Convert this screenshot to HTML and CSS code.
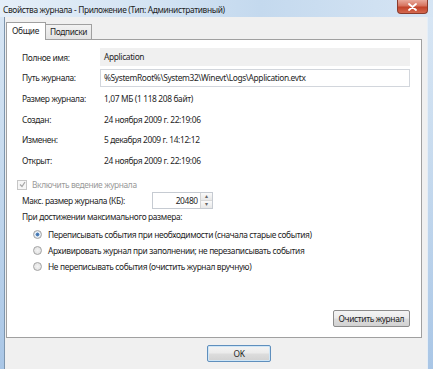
FILE: index.html
```html
<!DOCTYPE html>
<html lang="ru">
<head>
    <meta charset="UTF-8">
    <title>Свойства журнала</title>
    <link rel="stylesheet" href="styles.css">
</head>
<body>
    <div class="window">
        <div class="titlebar">
            <span class="title">Свойства журнала - Приложение (Тип: Административный)</span>
            <button class="close" title="Закрыть">
                <svg width="9" height="8" viewBox="0 0 9 8">
                    <path d="M1 1 L8 7 M8 1 L1 7" stroke="#fff" stroke-width="1.8" stroke-linecap="round"/>
                </svg>
            </button>
        </div>

        <div class="client">
            <div class="tabs">
                <div class="tab active">Общие</div>
                <div class="tab">Подписки</div>
            </div>

            <div class="panel">
                <div class="props">
                    <div class="label">Полное имя:</div>
                    <div class="value readonly">Application</div>

                    <div class="label">Путь журнала:</div>
                    <div class="value textbox">%SystemRoot%\System32\Winevt\Logs\Application.evtx</div>

                    <div class="label">Размер журнала:</div>
                    <div class="value">1,07 МБ (1 118 208 байт)</div>

                    <div class="label">Создан:</div>
                    <div class="value">24 ноября 2009 г. 22:19:06</div>

                    <div class="label">Изменен:</div>
                    <div class="value">5 декабря 2009 г. 14:12:12</div>

                    <div class="label">Открыт:</div>
                    <div class="value">24 ноября 2009 г. 22:19:06</div>
                </div>

                <div class="check disabled">
                    <span class="box">
                        <svg width="7" height="7" viewBox="0 0 7 7">
                            <path d="M1 3.5 L3 5.5 L6 1" fill="none" stroke="#a6a6a6" stroke-width="1.2"/>
                        </svg>
                    </span>
                    Включить ведение журнала
                </div>

                <div class="maxsize">
                    <span>Макс. размер журнала (КБ):</span>
                    <div class="spin">
                        <span class="spin-value">20480</span>
                        <span class="spin-arrows">
                            <span class="arrow">&#9652;</span>
                            <span class="arrow">&#9662;</span>
                        </span>
                    </div>
                </div>

                <div class="policy-title">При достижении максимального размера:</div>

                <div class="radios">
                    <div class="radio checked"><span class="dot"></span>Переписывать события при необходимости (сначала старые события)</div>
                    <div class="radio"><span class="dot"></span>Архивировать журнал при заполнении; не перезаписывать события</div>
                    <div class="radio"><span class="dot"></span>Не переписывать события (очистить журнал вручную)</div>
                </div>

                <div class="actions">
                    <button class="btn">Очистить журнал</button>
                </div>
            </div>

            <div class="footer">
                <button class="btn ok">OK</button>
            </div>
        </div>
    </div>
</body>
</html>
```

FILE: styles.css
```css
html, body {
    margin: 0;
    padding: 0;
}

body {
    font-family: "Noto Sans", "DejaVu Sans", sans-serif;
    font-size: 8.4px;
    letter-spacing: -0.36px;
    color: #262626;
    overflow: hidden;
    white-space: nowrap;
}

.window {
    width: 433px;
    height: 369px;
    display: flex;
    flex-direction: column;
    background: linear-gradient(180deg, #d9e7f5 0%, #c9dcef 40%, #a9c6e6 100%);
}

.titlebar {
    height: 17px;
    display: flex;
    align-items: center;
    justify-content: space-between;
    padding-left: 3px;
    background: linear-gradient(90deg, #e4eef8 0%, #d3e3f3 35%, #c4d9ee 60%, #d6e5f4 100%);
}

.title {
    color: #222;
    font-size: 8.4px;
    margin-top: 1px;
}

.close {
    width: 31px;
    height: 14px;
    margin-right: 5px;
    align-self: flex-start;
    border: 1px solid #8a3b2c;
    border-top: none;
    border-radius: 0 0 4px 4px;
    background: linear-gradient(180deg, #e9a99b 0%, #d6735e 45%, #c2432a 55%, #d4694f 100%);
    display: flex;
    align-items: center;
    justify-content: center;
    padding: 0;
}

.client {
    flex: 1;
    margin: 0 5px 0 4px;
    border-left: 1px solid #7d95ad;
    border-right: 1px solid #e6eef6;
    background: #f0f0f0;
    display: flex;
    flex-direction: column;
    padding-top: 4px;
}

.tabs {
    display: flex;
    align-items: flex-end;
    padding-left: 1px;
    height: 18px;
}

.tab {
    height: 14px;
    padding: 0 4px;
    line-height: 14px;
    border: 1px solid #a0a0a0;
    border-bottom: none;
    background: linear-gradient(180deg, #f2f2f2, #e3e3e3);
    margin-left: -1px;
}

.tab:first-child {
    margin-left: 0;
}

.tab.active {
    height: 17px;
    line-height: 16px;
    background: #fff;
    position: relative;
    z-index: 1;
    margin-bottom: -1px;
    padding: 0 6px 0 5px;
}

.panel {
    height: 299px;
    box-sizing: border-box;
    margin: 0 5px 0 1px;
    background: #fff;
    border: 1px solid #a0a0a0;
    display: flex;
    flex-direction: column;
    padding: 7px 11px 10px 15px;
}

.props {
    display: grid;
    grid-template-columns: 78px 310px;
    grid-auto-rows: 20.6px;
    align-items: center;
}

.value {
    padding-left: 4px;
}

.value.readonly {
    height: 18px;
    line-height: 18px;
    background: #f0f0f0;
}

.value.textbox {
    height: 16px;
    line-height: 16px;
    padding-left: 3px;
    border: 1px solid #d2d6dc;
}

.check {
    display: flex;
    align-items: center;
    height: 16px;
    margin-top: 6px;
    margin-left: -5px;
    gap: 5px;
}

.check.disabled {
    color: #9a9a9a;
}

.box {
    width: 8px;
    height: 8px;
    border: 1px solid #c6c6c6;
    background: #f6f6f6;
    display: flex;
    align-items: center;
    justify-content: center;
}

.maxsize {
    display: flex;
    align-items: center;
    height: 16px;
}

.spin {
    margin-left: 27px;
    width: 59px;
    height: 15px;
    border: 1px solid #c6cbd2;
    display: flex;
    align-items: center;
    justify-content: flex-end;
}

.spin-value {
    padding-right: 2px;
}

.spin-arrows {
    width: 11px;
    height: 15px;
    display: flex;
    flex-direction: column;
    border-left: 1px solid #d4d4d4;
}

.arrow {
    flex: 1;
    font-size: 6px;
    line-height: 7px;
    text-align: center;
    color: #666;
    background: linear-gradient(180deg, #fafafa, #e8e8e8);
    border-bottom: 1px solid #d8d8d8;
}

.arrow:last-child {
    border-bottom: none;
}

.policy-title {
    height: 16px;
    line-height: 16px;
}

.radios {
    margin-top: 2px;
    padding-left: 11px;
}

.radio {
    display: flex;
    align-items: center;
    height: 16px;
    gap: 6px;
}

.dot {
    width: 7px;
    height: 7px;
    border-radius: 50%;
    border: 1px solid #a3a3a3;
    background: radial-gradient(circle, #f4f4f4, #dcdcdc);
}

.radio.checked .dot {
    background: radial-gradient(circle, #3c6ea8 0, #5b8bc4 35%, #e6eef6 45%, #d8dde3 100%);
}

.actions {
    margin-top: auto;
    display: flex;
    justify-content: flex-end;
}

.btn {
    font-family: inherit;
    font-size: 8.4px;
    letter-spacing: -0.36px;
    color: #1e1e1e;
    height: 17px;
    padding: 0 5px;
    border: 1px solid #8c8c8c;
    border-radius: 2px;
    background: linear-gradient(180deg, #f4f4f4 0%, #ebebeb 48%, #dddddd 52%, #d2d2d2 100%);
    cursor: pointer;
}

.footer {
    flex: 1;
    padding: 7px 0 0 202px;
}

.ok {
    width: 64px;
    border-color: #5f8fbd;
    box-shadow: inset 0 0 0 1px #cfe6f7;
}
```
